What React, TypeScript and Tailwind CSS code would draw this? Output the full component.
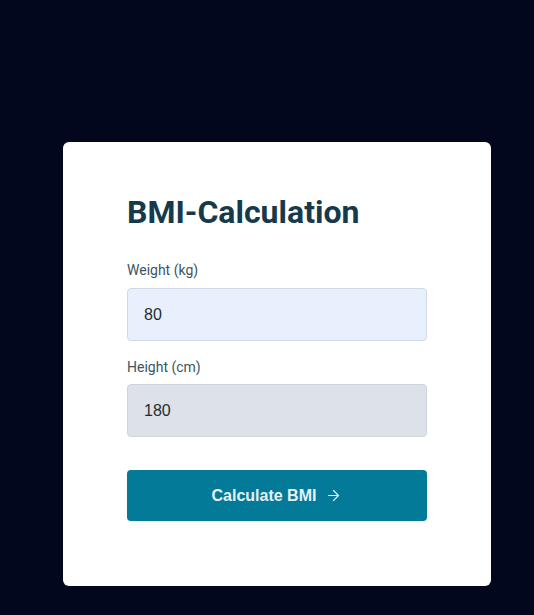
import React, { useState } from "react";
import { ArrowRight } from "lucide-react";

export default function App() {
  const [weight, setWeight] = useState("80");
  const [height, setHeight] = useState("180");

  return (
    <div className="min-h-screen w-full bg-[#03071e] flex justify-start pl-[63px] pt-[142px] font-['Roboto',sans-serif]">
      <div className="w-[428px] h-[444px] bg-white rounded-md px-16 pt-[50px]">
        <h1 className="text-[32px] font-bold text-[#163a4b] leading-10 mb-[28px]">BMI-Calculation</h1>

        {/* Weight */}
        <label className="block text-[14px] text-[#3b5661] leading-5 mb-[8px]">Weight (kg)</label>
        <input
          value={weight}
          onChange={(e) => setWeight(e.target.value)}
          className="block w-full h-[53px] px-4 rounded bg-[#e8f0fe] border border-[#d3d9e0] text-[16px] text-[#1f2d33] font-['Liberation_Sans',sans-serif] outline-none"
        />

        {/* Height */}
        <label className="block text-[14px] text-[#3b5661] leading-5 mt-[16px] mb-[7px]">Height (cm)</label>
        <input
          value={height}
          onChange={(e) => setHeight(e.target.value)}
          className="block w-full h-[53px] px-4 rounded bg-[#dde1e8] border border-[#cfd4db] text-[16px] text-[#1f2d33] font-['Liberation_Sans',sans-serif] outline-none"
        />

        <button className="mt-[33px] w-full h-[51px] rounded bg-[#047a99] text-[#e6f1f5] text-[16px] font-bold font-['Liberation_Sans',sans-serif] flex items-center justify-center gap-[9px]">
          Calculate BMI
          <ArrowRight className="w-[17px] h-[17px]" strokeWidth={1.75} />
        </button>
      </div>
    </div>
  );
}
